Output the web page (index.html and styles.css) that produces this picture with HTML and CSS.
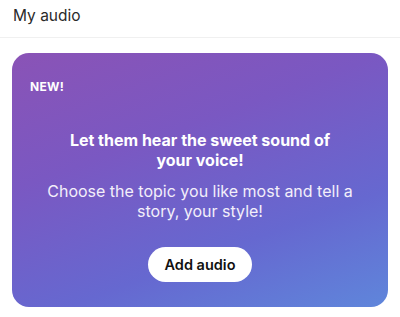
FILE: index.html
```html
<!DOCTYPE html>
<html>
<head>
<meta charset="utf-8">
<link rel="stylesheet" href="styles.css">
</head>
<body>
<div class="page">
  <header class="header">My audio</header>
  <section class="card">
    <div class="badge">NEW!</div>
    <div class="content">
      <h2 class="title">Let them hear the sweet sound of<br>your voice!</h2>
      <p class="desc">Choose the topic you like most and tell a<br>story, your style!</p>
      <button class="btn">Add audio</button>
    </div>
  </section>
</div>
</body>
</html>
```
FILE: styles.css
```css
html, body { margin: 0; padding: 0; background: #fff; }
body { font-family: Inter, "Noto Sans", sans-serif; color: #222; width: 400px; height: 317px; overflow: hidden; }
.page { display: flex; flex-direction: column; }
.header {
  height: 38px; box-sizing: border-box; padding: 6px 13px 0;
  font-size: 15.5px; line-height: 20px; color: #2a2a2a;
  border-bottom: 1px solid #f0f0f0;
}
.card {
  margin: 15px 12px 0;
  height: 254px; box-sizing: border-box;
  border-radius: 17px;
  background: linear-gradient(160deg, #8a53b6 0%, #7a58c2 35%, #6668d0 70%, #5f86db 100%);
  padding: 27px 18px 0;
  color: #fff;
}
.badge { font-size: 12px; font-weight: 700; letter-spacing: 0.3px; line-height: 14px; }
.content { display: flex; flex-direction: column; align-items: center; text-align: center; margin-top: 36px; }
.title { margin: 0; font-size: 16px; font-weight: 700; line-height: 20px; }
.desc { margin: 11px 0 0; font-size: 16px; font-weight: 400; line-height: 20px; color: #f3effa; }
.btn {
  margin-top: 26px; height: 35px; width: 104px;
  border: none; border-radius: 18px; background: #fff; color: #111;
  font-family: inherit; font-size: 14.5px; font-weight: 600; padding: 0;
}
```
